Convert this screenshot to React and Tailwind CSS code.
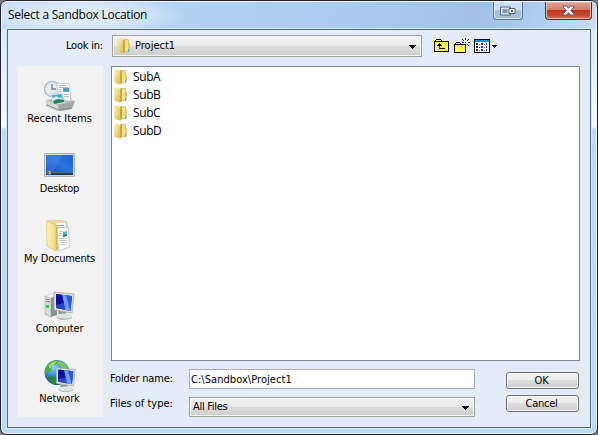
import React from 'react';

const FolderIcon = () => (
  <svg width="16" height="16" viewBox="0 0 16 16" className="block shrink-0">
    <defs>
      <linearGradient id="smallFront" x1="0" y1="0" x2="1" y2="1">
        <stop offset="0" stopColor="#fbf3b4" />
        <stop offset="1" stopColor="#dcbc48" />
      </linearGradient>
    </defs>
    <path d="M7 1h5l1 1v11l-1 1H7z" fill="#e0c664" />
    <path d="M9 2h3v11H9z" fill="#f0de92" />
    <path d="M1.500 1 6 .5v14l-4.500-1z" fill="#e9d271" />
    <path d="M1.500 1h4l1.500 1.500V15.500L1.500 14z" fill="url(#smallFront)" />
    <path d="M7 2.500 9 1.500v12.500l-2 1.500z" fill="#cba83a" />
    <path d="M12 11h1.500v2.500L12 14z" fill="#4cb4dc" />
    <path d="M13 5h1v6h-1z" fill="#e2c766" />
  </svg>
);

const RecentIcon = () => (
  <svg width="32" height="32" viewBox="0 0 32 32">
    <path d="M2 20 20 17l11 4-5 9-12 1-12-5z" fill="#b9bbba" />
    <path d="m2 20 12 5 17-4-3 8-13 2-12-5z" fill="#d9dad8" />
    <path d="m14 25 17-4-3 8-13 2z" fill="#a3a7a4" />
    <path d="m3 25 12 5 13-2" stroke="#858b88" fill="none" />
    <circle cx="8" cy="9" r="7.500" fill="#e2ebf2" stroke="#b3c0c9" strokeWidth="1.500" />
    <path d="M8 4v5h4" stroke="#728697" strokeWidth="1.300" fill="none" />
    <path d="m13 3 12 1 2 17-13-1z" fill="#fafafa" stroke="#b4b9bb" strokeWidth=".7" />
    <path d="M15 5.500h7M15 7.500h9M15 9.500h3M15 11.500h3M20 14.500h5M20 16.500h5" stroke="#b9bdc0" />
    <path d="M19 8h6v4h-6z" fill="#5aa4c2" />
    <path d="m7 14 11-1 3 10-12 2z" fill="#f7fbff" stroke="#a7b5bd" strokeWidth=".5" />
    <path d="m8 15 9.500-1 2.500 8-10 2z" fill="#45a6e5" />
    <path d="m8.500 18 4-2 3 2 2-1 2 5-10 2z" fill="#c5e8f6" />
    <path d="m9 21 5-2 6 1v2l-10 2z" fill="#248252" />
  </svg>
);

const DesktopIcon = () => (
  <svg width="32" height="32" viewBox="0 0 32 32">
    <defs>
      <linearGradient id="deskBlue" x1="0" y1="1" x2="1" y2="0">
        <stop offset="0" stopColor="#1446b4" />
        <stop offset=".55" stopColor="#2b74e0" />
        <stop offset="1" stopColor="#2060cf" />
      </linearGradient>
    </defs>
    <path d="M.5 3.500h30v23H.5z" fill="#d6d5ca" stroke="#b0b4b5" />
    <path d="M2 5h27v20H2z" fill="url(#deskBlue)" />
    <path d="M2 5h17L9 21H2z" fill="#5896ef" opacity=".3" />
    <path d="M2 22h27v3H2z" fill="#23394c" />
    <path d="M7 22h22v1H7z" fill="#54718a" />
    <circle cx="5" cy="22.500" r="2.700" fill="#297cc1" />
    <path d="M3.500 21h1.500v1.500H3.500z" fill="#ef6b35" />
    <path d="M5 21h1.500v1.500H5z" fill="#8ccc46" />
    <path d="M5 22.500h1.500V24H5z" fill="#f7d64d" />
  </svg>
);

const DocumentsIcon = () => (
  <svg width="32" height="32" viewBox="0 0 32 32">
    <defs>
      <linearGradient id="docFront" x1="0" y1="0" x2="1" y2="0">
        <stop offset="0" stopColor="#fff1b4" />
        <stop offset="1" stopColor="#f3da88" />
      </linearGradient>
    </defs>
    <path d="M3 1 15 0l8 2v24l-9 3z" fill="#efd889" stroke="#dcc579" strokeWidth=".7" />
    <path d="m11 3 11-1 1 22-10 3z" fill="#f9f9f7" stroke="#c0c5c6" strokeWidth=".6" />
    <path d="M13 5.500h7M13 7.500h7" stroke="#7fb2bd" />
    <path d="m13 8 11-1 1.500 20-11 4z" fill="#fff" stroke="#b0b8bc" strokeWidth=".7" />
    <path d="M15 11.500h4M15 13.500h4M15 15.500h3M15 18.500h8M15 20.500h8M16 22.500h7M16 24.500h6" stroke="#c3cacf" />
    <path d="m19 12 4-1v5l-4 1z" fill="#58afd0" />
    <path d="m19 15 4-1v2l-4 1z" fill="#2f7d6c" />
    <path d="M2.500 1 12 5v26l-9-5z" fill="url(#docFront)" stroke="#dcc16c" strokeWidth=".7" />
    <path d="m12 5 1.500 1v24L12 31z" fill="#d9ba5a" />
  </svg>
);

const Monitor = () => (
  <g>
    <path d="m14 21 8 1v5h-7z" fill="#8c9496" />
    <ellipse cx="20" cy="27" rx="8" ry="3" fill="#b5babb" />
    <ellipse cx="20" cy="26" rx="8" ry="2.500" fill="#e1e4e4" />
    <path d="m10 2 20 2-2 19-18-3z" fill="#e2e2db" stroke="#a1a7aa" strokeWidth=".8" />
    <path d="m12 4 16 2-1.500 15L12 18z" fill="#071caa" />
    <path d="m18 4.800 5 .6L26.500 21 21 20z" fill="#719cf3" />
    <path d="m22 5.300 6 .7-1.500 15z" fill="#2b55dd" />
    <path d="m12 4 6 .8 2 9-8 2z" fill="#0711a0" />
    <path d="m12 15 8-2 1 6.800-9-1.800z" fill="#2748c8" />
  </g>
);

const ComputerIcon = () => (
  <svg width="32" height="32" viewBox="0 0 32 32">
    <path d="m1 6 7-3 5 2v20l-6 2-6-3z" fill="#8a9090" />
    <path d="m1 6 6 2v19l-6-3z" fill="#d9dede" stroke="#8b9191" strokeWidth=".5" />
    <path d="m1 6 7-3 5 2-6 3z" fill="#f0f1f0" />
    <path d="m2 9 4 1M2 11l4 1" stroke="#76807e" />
    <path d="M2 15h3v3H2z" fill="#30c83c" />
    <path d="m12 26 9-2 5 3-9 3z" fill="#aeb4b3" />
    <Monitor />
  </svg>
);

const NetworkIcon = () => (
  <svg width="32" height="32" viewBox="0 0 32 32">
    <defs>
      <radialGradient id="globe" cx=".35" cy=".28" r=".75">
        <stop offset="0" stopColor="#91d7f9" />
        <stop offset=".5" stopColor="#2e83d1" />
        <stop offset="1" stopColor="#093d89" />
      </radialGradient>
    </defs>
    <circle cx="13" cy="12.500" r="12.500" fill="url(#globe)" />
    <path d="M2 7C5 1 10 0 14 0l-1 4-5 2-1 5-5 2-1 3z" fill="#4aab43" />
    <path d="m15 1 6 2 3 5-5 1-3-3-3-1z" fill="#77c95c" />
    <path d="m3 17 5-1 4 4 1 5-5-1z" fill="#238d34" />
    <path d="M5 5c3-3 6-4 8-4l-3 4-5 4z" fill="#c6e994" opacity=".7" />
    <g transform="translate(3 6) scale(.94 .87)">
      <Monitor />
    </g>
  </svg>
);

const Checker = () => (
  <defs>
    <pattern id="checker" width="2" height="2" patternUnits="userSpaceOnUse">
      <path d="M0 0h2v2H0z" fill="#ffff00" />
      <path d="M0 0h1v1H0zM1 1h1v1H1z" fill="#ffff80" />
    </pattern>
  </defs>
);

const UpIcon = () => (
  <svg width="16" height="16" viewBox="0 0 16 16" shapeRendering="crispEdges">
    <Checker />
    <path d="M1 2h1V1h5v1h1v1h7v11H0V3h1z" fill="#000" />
    <path d="M1 4h13v9H1zM2 2h5v1H2z" fill="url(#checker)" />
    <path d="M5 5h1v1h1v1h1v1H6v2h5v1H5V8H3V7h1V6h1z" fill="#000" />
  </svg>
);

const NewFolderIcon = () => (
  <svg width="16" height="16" viewBox="0 0 16 16" shapeRendering="crispEdges" className="overflow-visible">
    <path d="M0 6h1V5h1V4h4v1h1v1h5v9H0z" fill="#000" />
    <path d="M1 7h10v7H1zM2 5h4v1H2z" fill="url(#checker)" />
    <path d="M11 0h1v2h-1zM11 7h1v2h-1zM8 4h2v1H8zM14 4h2v1h-2zM8 1h1v1H8zM9 2h1v1H9zM14 1h1v1h-1zM13 2h1v1h-1zM9 6h1v1H9zM13 6h1v1h-1zM14 7h1v1h-1zM11 4h1v1h-1z" fill="#222" />
  </svg>
);

const ViewsIcon = () => (
  <svg width="24" height="16" viewBox="0 0 24 16" shapeRendering="crispEdges">
    <path d="M0 1h16v14H0z" fill="#000" />
    <path d="M1 2h14v12H1z" fill="#fff" />
    <path d="M1 2h14v2H1z" fill="#168be8" />
    <path d="M2 5h2v2H2zM2 8h2v2H2zM2 11h2v2H2zM7 5h2v2H7zM7 8h2v2H7zM7 11h2v2H7zM12 5h1v2h-1zM12 8h1v2h-1zM12 11h1v2h-1z" fill="#303080" />
    <path d="M5 6h1v1H5zM5 9h1v1H5zM5 12h1v1H5zM10 6h1v1h-1zM10 9h1v1h-1zM10 12h1v1h-1z" fill="#555" />
    <path d="M18 7h5v1h-1v1h-1v1h-1V9h-1V8h-1z" fill="#000" />
  </svg>
);

const Arrow = () => (
  <svg width="7" height="4" viewBox="0 0 7 4" shapeRendering="crispEdges" className="mt-px block shrink-0">
    <path d="M0 0h7v1H6v1H5v1H4v1H3V3H2V2H1V1H0z" fill="#000" />
  </svg>
);

const places = [
  { name: 'Recent Items', icon: <RecentIcon />, track: 'tracking-[-0.02px]' },
  { name: 'Desktop', icon: <DesktopIcon />, track: 'tracking-[-0.2px]' },
  { name: 'My Documents', icon: <DocumentsIcon />, track: 'tracking-[-0.25px]' },
  { name: 'Computer', icon: <ComputerIcon />, track: 'tracking-[-0.2px]' },
  { name: 'Network', icon: <NetworkIcon />, track: 'tracking-[-0.15px]' },
];

const folders = ['SubA', 'SubB', 'SubC', 'SubD'];

function TitleBar() {
  return (
    <div className="flex h-[27px] items-start bg-[radial-gradient(ellipse_110px_22px_at_75px_13px,#e6f0fb_0%,#d6e6f8_55%,transparent_100%),linear-gradient(100deg,#bdd6f1_0%,#b0d0f3_35%,#abccf0_55%,#a0c2e8_80%,#a9caee_88%,#c8def5_100%)]">
      <h1 className="ml-[6px] mt-[4px] grow whitespace-nowrap font-['Open_Sans','Noto_Sans',sans-serif] text-[12px] leading-[18px] tracking-[-0.26px]">
        Select a Sandbox Location
      </h1>
      <button className="mr-[22px] flex h-[18px] w-[30px] items-center justify-center rounded-b-[4px] border border-t-0 border-[#5f7690] bg-linear-to-b from-[#cbdff4] from-50% to-[#a5bfdb] to-50% shadow-[inset_0_0_0_1px_#d8e8f8]">
        <svg width="16" height="10" viewBox="0 0 16 10">
          <path d="M.5 1h10v8H.5z" fill="#e4eaf1" stroke="#56677c" />
          <path d="M2.500 3h5v4h-5z" fill="#8494a6" />
          <path d="M9 2.500h6v5H9z" fill="#fff" stroke="#4d5d71" />
          <path d="M11 4h2v2h-2z" fill="#4d5d71" />
        </svg>
      </button>
      <button className="mr-[4px] flex h-[18px] w-[47px] items-center justify-center rounded-b-[4px] border border-t-0 border-[#612b2b] bg-[linear-gradient(180deg,#e6a598_0%,#d37a69_48%,#b93520_50%,#c84a32_80%,#dd7f63_100%)] shadow-[inset_0_0_0_1px_#edb8a9]">
        <svg width="13" height="11" viewBox="0 0 13 11">
          <path d="M1 1h3.500l2 2.300L8.500 1H12v1L8.700 5.500 12 9v1H8.500l-2-2.300-2 2.300H1V9l3.300-3.500L1 2z" fill="#fff" stroke="#53637a" />
        </svg>
      </button>
    </div>
  );
}

function Select({ children }) {
  return (
    <div className="flex h-full w-full items-center justify-between border border-[#a0a0a0] bg-[linear-gradient(180deg,#f3f3f3_0%,#ebebeb_47%,#dcdcdc_50%,#cdcdcd_100%)] pr-[5px] shadow-[inset_0_0_0_1px_#f6f6f6]">
      <div className="flex items-center">{children}</div>
      <Arrow />
    </div>
  );
}

function Places() {
  return (
    <nav className="h-[351px] w-[85px] shrink-0 bg-[#f2f2f2] pr-[2px] pt-[14px]">
      {places.map((place) => (
        <div key={place.name} className="flex h-[70px] flex-col items-center">
          <div className="h-[32px] pl-px">{place.icon}</div>
          <span className={`whitespace-nowrap leading-[13px] ${place.track}`}>{place.name}</span>
        </div>
      ))}
    </nav>
  );
}

function App() {
  return (
    <div className="h-[435px] w-[598px] overflow-hidden bg-[#777c84] font-['DejaVu_Sans_Condensed','DejaVu_Sans',sans-serif] text-[11px] text-black">
      <div className="h-full overflow-hidden rounded-[7px] border border-[#20232b] bg-[linear-gradient(180deg,#c5dcf4_0px,#dce9f8_30px,#e9f3fd_80px,#f4f9fe_126px,#b9d9fa_128px,#b9dafb_100%)] shadow-[inset_0_0_0_1px_#f0f8ff]">
        <div className="px-px pt-px">
          <TitleBar />
        </div>
        <div className="mx-[6px] h-[399px] border border-[#566573] bg-[#e4eaf6] shadow-[0_0_0_1px_#d3ecfa]">
          <div className="flex h-[36px] pt-[5px]">
            <div className="w-[104px] shrink-0 pr-[9px] pt-[4px] text-right leading-[14px] tracking-[-0.2px]">Look in:</div>
            <div className="h-[22px] w-[310px] shrink-0">
              <Select>
                <span className="ml-[3px]"><FolderIcon /></span>
                <span className="ml-[3px] leading-[14px]">Project1</span>
              </Select>
            </div>
            <div className="flex gap-[4px] pl-[12px] pt-[3px]">
              <UpIcon />
              <NewFolderIcon />
              <ViewsIcon />
            </div>
          </div>

          <div className="flex pl-[10px]">
            <Places />
            <div className="ml-[8px] flex grow flex-col">
              <div className="h-[295px] w-[469px] border border-[#828790] bg-white pt-px font-['Open_Sans','Noto_Sans',sans-serif] text-[12px]">
                {folders.map((name) => (
                  <div key={name} className="flex h-[18px] items-center pl-px">
                    <FolderIcon />
                    <span className="ml-[4px] leading-[18px] tracking-[-0.4px]">{name}</span>
                  </div>
                ))}
              </div>
              <div className="flex pt-[8px]">
                <div className="-ml-px w-[79px] shrink-0">
                  <div className="h-[28px] pt-[3px] leading-[13px] tracking-[-0.2px]">Folder name:</div>
                  <div className="leading-[13px]">Files of type:</div>
                </div>
                <div className="w-[286px] shrink-0">
                  <input
                    defaultValue="C:\Sandbox\Project1"
                    className="block h-[20px] w-full border border-[#abadb3] bg-white pl-px tracking-[0.05px] outline-none"
                  />
                  <div className="mt-[8px] h-[20px]">
                    <Select>
                      <span className="ml-[3px] mt-px tracking-[-0.3px]">All Files</span>
                    </Select>
                  </div>
                </div>
                <div className="ml-[31px] mt-[3px] flex flex-col gap-[6px]">
                  {['OK', 'Cancel'].map((label) => (
                    <button
                      key={label}
                      className="h-[17px] w-[73px] rounded-[3px] border border-[#707070] bg-[linear-gradient(180deg,#f3f3f3_0%,#ebebeb_48%,#dddddd_50%,#cfcfcf_100%)] pr-[2px] leading-[14px] tracking-[-0.25px] shadow-[inset_0_0_0_1px_#fafafa]"
                    >
                      {label}
                    </button>
                  ))}
                </div>
              </div>
            </div>
          </div>
        </div>
      </div>
    </div>
  );
}

export default App;
